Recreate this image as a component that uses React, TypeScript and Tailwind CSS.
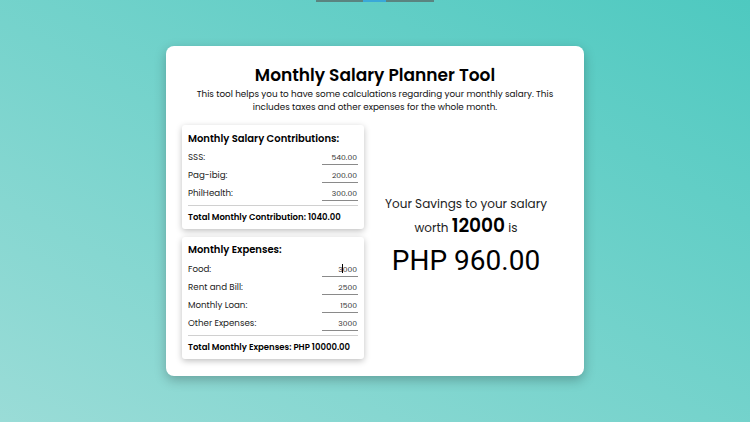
import React from "react";

const font = { fontFamily: "Poppins, Inter, 'Noto Sans', sans-serif" };

function Row({ label, value, caret }: { label: string; value: string; caret?: boolean }) {
  return (
    <div className="flex h-[18px] items-end justify-between">
      <span className="pb-[3px] text-[8.7px] leading-[12px] text-[#222]">{label}</span>
      <div className="relative mb-[1px] h-[14px] w-[36px] border-b border-[#8a8a8a] pr-[1px] text-right text-[7.6px] leading-[14px] text-[#333]">
        {value}
        {caret && <span className="absolute left-[20px] top-[1px] h-[9px] w-[1px] bg-black" />}
      </div>
    </div>
  );
}

export default function App() {
  return (
    <div
      className="relative h-[422px] w-[750px] overflow-hidden bg-[linear-gradient(to_top_right,#9adcd7,#4ec9c0)] pt-[46px]"
      style={font}
    >
      <div className="absolute left-[316px] top-0 flex h-[2px] w-[118px]">
        <div className="w-[47px] bg-[#5a8480]" />
        <div className="w-[23px] bg-[#3aa8d8]" />
        <div className="flex-1 bg-[#5a8480]" />
      </div>
      <div className="mx-auto flex h-[330px] w-[418px] flex-col rounded-lg bg-white px-4 pt-[17px] shadow-[0_4px_12px_rgba(0,0,0,0.25)]">
        <h1 className="text-center text-[17px] font-semibold leading-[24px] text-black">Monthly Salary Planner Tool</h1>
        <p className="mx-auto mt-[1px] w-[372px] text-center text-[8.8px] leading-[13px] text-[#111]">
          This tool helps you to have some calculations regarding your monthly salary. This includes taxes and other expenses for the whole month.
        </p>
        <div className="mt-[11px] flex">
          <div className="flex w-[182px] flex-col gap-[8px]">
            <div className="rounded-[3px] bg-white px-[6px] pb-[6px] pt-[7px] shadow-[0_2px_6px_rgba(0,0,0,0.25)]">
              <h2 className="mb-[2px] text-[10px] font-semibold leading-[14px] text-black">Monthly Salary Contributions:</h2>
              <Row label="SSS:" value="540.00" />
              <Row label="Pag-ibig:" value="200.00" />
              <Row label="PhilHealth:" value="300.00" />
              <div className="mt-[3px] border-t border-[#d0d0d0] pt-[5px] text-[8.5px] font-semibold leading-[12px] text-black">
                Total Monthly Contribution: 1040.00
              </div>
            </div>
            <div className="rounded-[3px] bg-white px-[6px] pb-[6px] pt-[6px] shadow-[0_2px_6px_rgba(0,0,0,0.25)]">
              <h2 className="mb-[3px] text-[10px] font-semibold leading-[14px] text-black">Monthly Expenses:</h2>
              <Row label="Food:" value="3000" caret />
              <Row label="Rent and Bill:" value="2500" />
              <Row label="Monthly Loan:" value="1500" />
              <Row label="Other Expenses:" value="3000" />
              <div className="mt-[3px] border-t border-[#d0d0d0] pt-[5px] text-[8.5px] font-semibold leading-[12px] text-black">
                Total Monthly Expenses: PHP 10000.00
              </div>
            </div>
          </div>
          <div className="flex flex-1 flex-col items-center justify-center pb-[10px] text-center">
            <div className="text-[12px] leading-[18px] text-[#222]">Your Savings to your salary</div>
            <div className="text-[12px] leading-[26px] text-[#222]">
              worth <span className="text-[18.6px] font-semibold text-black">12000</span> is
            </div>
            <div className="mt-[2px] text-[28px] leading-[36px] text-black" style={{ fontFamily: "Roboto, 'Liberation Sans', sans-serif" }}>
              PHP 960.00
            </div>
          </div>
        </div>
      </div>
    </div>
  );
}
